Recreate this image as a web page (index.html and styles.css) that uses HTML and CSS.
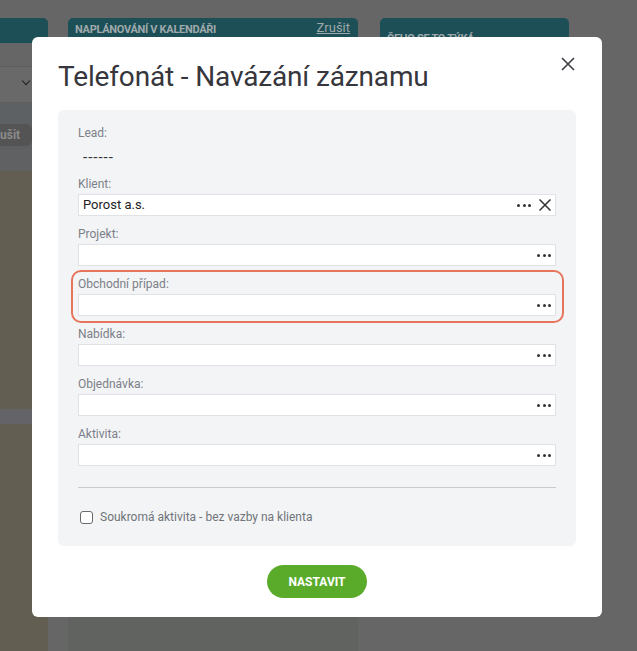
FILE: index.html
```html
<!DOCTYPE html>
<html lang="cs">
<head>
<meta charset="utf-8">
<title>Telefonát - Navázání záznamu</title>
<link rel="stylesheet" href="styles.css">
</head>
<body>
<div class="page">
  <div class="col col-left">
    <div class="head"></div>
    <div class="gap1"></div>
    <div class="select"><span class="chev"></span></div>
    <div class="band"><span class="btn-dark">ušit</span></div>
    <div class="band2"></div>
    <div class="brown"></div>
    <div class="grayband"></div>
    <div class="brown grow"></div>
  </div>
  <div class="col col-mid">
    <div class="head"><span class="head-title">NAPLÁNOVÁNÍ V KALENDÁŘI</span><span class="head-link">Zrušit</span></div>
    <div class="mid-body"></div>
  </div>
  <div class="col col-right">
    <div class="head"><span class="head-title head-title-r">ČEHO SE TO TÝKÁ</span></div>
  </div>
</div>

<div class="modal">
  <div class="modal-head">
    <h1 class="modal-title">Telefonát - Navázání záznamu</h1>
    <span class="close">
      <svg width="14" height="14" viewBox="0 0 14 14"><path d="M1 1L13 13M13 1L1 13" stroke="#3c3c44" stroke-width="1.6" fill="none"/></svg>
    </span>
  </div>
  <div class="panel">
    <div class="group lead">
      <div class="label">Lead:</div>
      <div class="value">------</div>
    </div>
    <div class="group">
      <div class="label">Klient:</div>
      <div class="input"><span class="input-text">Porost a.s.</span><span class="dots"><i></i><i></i><i></i></span><span class="clear"><svg width="12" height="12" viewBox="0 0 12 12"><path d="M0.5 0.5L11.5 11.5M11.5 0.5L0.5 11.5" stroke="#333" stroke-width="1.5" fill="none"/></svg></span></div>
    </div>
    <div class="group">
      <div class="label">Projekt:</div>
      <div class="input"><span class="input-text"></span><span class="dots"><i></i><i></i><i></i></span></div>
    </div>
    <div class="group hl">
      <div class="label">Obchodní případ:</div>
      <div class="input"><span class="input-text"></span><span class="dots"><i></i><i></i><i></i></span></div>
      <div class="highlight"></div>
    </div>
    <div class="group">
      <div class="label">Nabídka:</div>
      <div class="input"><span class="input-text"></span><span class="dots"><i></i><i></i><i></i></span></div>
    </div>
    <div class="group">
      <div class="label">Objednávka:</div>
      <div class="input"><span class="input-text"></span><span class="dots"><i></i><i></i><i></i></span></div>
    </div>
    <div class="group">
      <div class="label">Aktivita:</div>
      <div class="input"><span class="input-text"></span><span class="dots"><i></i><i></i><i></i></span></div>
    </div>
    <div class="sep"></div>
    <label class="check"><span class="box"></span><span class="check-text">Soukromá aktivita - bez vazby na klienta</span></label>
  </div>
  <div class="actions">
    <button class="btn-green">NASTAVIT</button>
  </div>
</div>
</body>
</html>
```

FILE: styles.css
```css
* { box-sizing: border-box; }
html, body { margin: 0; padding: 0; }
body {
  width: 637px;
  height: 651px;
  overflow: hidden;
  background: #666666;
  font-family: Roboto, "Liberation Sans", Arial, sans-serif;
}
.page {
  display: flex;
  height: 651px;
  padding-top: 18px;
}
.col { display: flex; flex-direction: column; }
.col-left { width: 48px; }
.col-mid { width: 290px; margin-left: 20px; }
.col-right { width: 189px; margin-left: 22px; }
.head {
  background: #1d4f57;
  border-radius: 0 5px 0 0;
  height: 25px;
}
.col-mid .head, .col-right .head {
  border-radius: 5px 5px 0 0;
  height: 40px;
  display: flex;
  justify-content: space-between;
  padding: 3px 8px 0 7px;
}
.head-title {
  font-family: "Roboto", sans-serif;
  font-weight: 700;
  font-size: 11px;
  letter-spacing: -0.3px;
  color: #9fa9ab;
  line-height: 18px;
}
.head-title-r { margin-top: 9px; }
.head-link {
  font-size: 13px;
  color: #9fa9ab;
  text-decoration: underline;
  line-height: 14px;
}
.gap1 { height: 24px; border-bottom: 1px solid #5e5e5e; }
.select {
  height: 36px;
  background: #696969;
  border-bottom: 1px solid #5e5e5e;
  position: relative;
}
.chev {
  position: absolute;
  left: 23px;
  top: 11px;
  width: 6px;
  height: 6px;
  border-right: 1.5px solid #222;
  border-bottom: 1.5px solid #222;
  transform: rotate(45deg);
}
.band {
  height: 46px;
  background: #5d6164;
  padding-top: 21px;
}
.btn-dark {
  display: block;
  width: 32px;
  height: 22px;
  background: #545454;
  border-radius: 0 6px 6px 0;
  color: #8c8c8c;
  font-weight: 700;
  font-size: 12px;
  line-height: 22px;
  white-space: nowrap;
}
.band2 { height: 22px; background: #5f6163; }
.brown { height: 238px; background: #635e52; }
.grayband { height: 15px; background: #646468; }
.grow { flex: 1; }
.mid-body { flex: 1; background: #616361; }

/* modal */
.modal {
  position: fixed;
  left: 32px;
  top: 37px;
  width: 570px;
  height: 580px;
  background: #ffffff;
  border-radius: 6px;
  padding: 0 26px;
}
.modal-head {
  display: flex;
  justify-content: space-between;
  align-items: flex-start;
}
.modal-title {
  margin: 20px 0 0 0;
  font-family: Roboto, sans-serif;
  font-weight: 400;
  font-size: 28px;
  line-height: 40px;
  color: #36363c;
  letter-spacing: -0.15px;
}
.close {
  margin-top: 20px;
  margin-right: 1px;
  width: 14px;
  height: 14px;
  display: block;
}
.close svg { display: block; }
.panel {
  margin-top: 13px;
  background: #f3f4f6;
  border-radius: 6px;
  height: 436px;
  padding: 15px 20px 0 20px;
}
.group {
  display: flex;
  flex-direction: column;
  gap: 2px;
  margin-bottom: 10px;
}
.group.hl { position: relative; }
.label {
  font-size: 12px;
  line-height: 16px;
  color: #7b8087;
}
.lead { gap: 0; margin-bottom: 11px; }
.lead .value {
  margin-top: 8px;
  font-size: 15px;
  line-height: 16px;
  letter-spacing: 1px;
  color: #333;
  padding-left: 5px;
}
.input {
  height: 22px;
  background: #ffffff;
  border: 1px solid #e1e2e5;
  display: flex;
  align-items: center;
  padding: 0 4px 0 4px;
}
.input-text {
  flex: 1;
  font-size: 13px;
  color: #222;
  line-height: 20px;
}
.dots {
  display: flex;
  gap: 2.5px;
  width: 14px;
}
.dots i {
  display: block;
  width: 3px;
  height: 3px;
  border-radius: 50%;
  background: #333;
}
.clear {
  width: 12px;
  height: 12px;
  margin-left: 8px;
}
.clear svg { display: block; }
.highlight {
  position: absolute;
  left: -7px;
  right: -8px;
  top: -6px;
  bottom: -7px;
  border: 2.5px solid #e7755c;
  border-radius: 10px;
  pointer-events: none;
}
.sep {
  height: 1px;
  background: #c9cacd;
  margin-top: 21px;
}
.check {
  display: flex;
  align-items: center;
  margin-top: 21px;
  padding-left: 2px;
}
.box {
  width: 13px;
  height: 13px;
  border: 1px solid #6b6b6b;
  border-radius: 3px;
  background: #fff;
}
.check-text {
  margin-left: 7px;
  font-size: 12px;
  color: #6f747a;
  line-height: 16px;
}
.actions {
  display: flex;
  justify-content: center;
  padding-top: 19px;
}
.btn-green {
  width: 100px;
  height: 33px;
  border: none;
  border-radius: 17px;
  background: #5aab2a;
  color: #ffffff;
  font-family: Roboto, sans-serif;
  font-weight: 700;
  font-size: 12px;
  padding: 0;
}
```
